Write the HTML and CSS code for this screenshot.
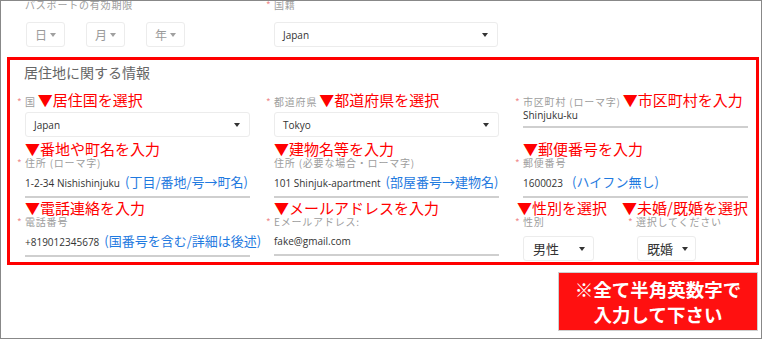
FILE: index.html
```html
<!DOCTYPE html>
<html lang="ja">
<head>
<meta charset="utf-8">
<link rel="stylesheet" href="styles.css">
</head>
<body>
<div class="frame">
  <div class="top">
    <div class="tcol">
      <div class="label">パスポートの有効期限</div>
      <div class="dates">
        <div class="dsel">日<span class="caret light"></span></div>
        <div class="dsel">月<span class="caret light"></span></div>
        <div class="dsel">年<span class="caret light"></span></div>
      </div>
    </div>
    <div class="tcol">
      <div class="label"><span class="req">*</span>国籍</div>
      <div class="select top-select"><span>Japan</span><span class="caret"></span></div>
    </div>
  </div>

  <section class="res">
    <h2 class="title">居住地に関する情報</h2>
    <div class="grid">
      <!-- row 1 -->
      <div class="cell">
        <div class="lab-line"><span class="label"><span class="req">*</span>国</span><span class="ann inl">▼居住国を選択</span></div>
        <div class="select"><span>Japan</span><span class="caret"></span></div>
      </div>
      <div class="cell">
        <div class="lab-line"><span class="label"><span class="req">*</span>都道府県</span><span class="ann inl">▼都道府県を選択</span></div>
        <div class="select"><span>Tokyo</span><span class="caret"></span></div>
      </div>
      <div class="cell">
        <div class="lab-line"><span class="label"><span class="req">*</span>市区町村 (ローマ字)</span><span class="ann inl">▼市区町村を入力</span></div>
        <div class="val compact">Shinjuku-ku</div>
      </div>

      <!-- row 2 -->
      <div class="cell">
        <div class="ann r2">▼番地や町名を入力</div>
        <div class="label"><span class="req">*</span>住所 (ローマ字)</div>
        <div class="val">1-2-34 Nishishinjuku<span class="hint">(丁目/番地/号→町名)</span></div>
      </div>
      <div class="cell">
        <div class="ann r2">▼建物名等を入力</div>
        <div class="label">住所 (必要な場合・ローマ字)</div>
        <div class="val">101 Shinjuk-apartment<span class="hint">(部屋番号→建物名)</span></div>
      </div>
      <div class="cell">
        <div class="ann r2">▼郵便番号を入力</div>
        <div class="label"><span class="req">*</span>郵便番号</div>
        <div class="val">1600023<span class="hint wide">(ハイフン無し)</span></div>
      </div>

      <!-- row 3 -->
      <div class="cell">
        <div class="ann r3">▼電話連絡を入力</div>
        <div class="label"><span class="req">*</span>電話番号</div>
        <div class="val">+819012345678<span class="hint">(国番号を含む/詳細は後述)</span></div>
      </div>
      <div class="cell">
        <div class="ann r3">▼メールアドレスを入力</div>
        <div class="label"><span class="req">*</span>Eメールアドレス:</div>
        <div class="val">fake@gmail.com</div>
      </div>
      <div class="cell">
        <div class="ann r3 pair-ann"><span>▼性別を選択</span><span>▼未婚/既婚を選択</span></div>
        <div class="pair">
          <div class="sub sub1">
            <div class="label"><span class="req">*</span>性別</div>
            <div class="msel m1"><span>男性</span><span class="caret"></span></div>
          </div>
          <div class="sub">
            <div class="label"><span class="req">*</span>選択してください</div>
            <div class="msel m2"><span>既婚</span><span class="caret"></span></div>
          </div>
        </div>
      </div>
    </div>
  </section>

  <div class="note">※全て半角英数字で<br>入力して下さい</div>
</div>
</body>
</html>
```

FILE: styles.css
```css
* { box-sizing: border-box; }

body {
  margin: 0;
  background: #fff;
  font-family: "Noto Sans", "Noto Sans CJK JP", sans-serif;
}

.frame {
  width: 762px;
  height: 339px;
  border: 1px solid #888;
  overflow: hidden;
  background: #fff;
}

/* ---------- top (passport) ---------- */
.top {
  display: grid;
  grid-template-columns: 225px 224px;
  column-gap: 24px;
  padding-left: 24px;
  margin-top: -2px;
}

.label {
  font-family: "Noto Sans CJK JP", sans-serif;
  font-size: 10px;
  letter-spacing: 0.8px;
  color: #9d9d9d;
  line-height: 12px;
  white-space: nowrap;
}

.req {
  display: inline-block;
  width: 8px;
  margin-left: -8px;
  color: #f08c8c;
  letter-spacing: 0;
}

.dates {
  display: flex;
  gap: 21px;
  margin-top: 11px;
  padding-left: 1px;
}

.dsel {
  width: 39px;
  height: 25px;
  border: 1px solid #ececec;
  border-radius: 3px;
  display: flex;
  align-items: center;
  justify-content: center;
  font-family: "Noto Sans CJK JP", sans-serif;
  font-size: 12px;
  color: #9a9a9a;
}

.caret {
  display: inline-block;
  width: 0;
  height: 0;
  border-left: 3.5px solid transparent;
  border-right: 3.5px solid transparent;
  border-top: 4px solid #333;
}

.caret.light {
  border-top-color: #a0a0a0;
  margin-left: 3px;
}

.select {
  height: 25px;
  border: 1px solid #ececec;
  border-radius: 3px;
  display: flex;
  align-items: center;
  justify-content: space-between;
  padding: 0 9px 0 8px;
  font-family: "Open Sans", sans-serif;
  font-size: 10px;
  color: #333;
  margin-top: 3px;
}

.top-select { margin-top: 11px; }

/* ---------- residence section ---------- */
.res {
  margin: 10px 2px 0 6px;
  height: 208px;
  border: 3px solid #ff0000;
  padding: 2px 0 0 15px;
}

.title {
  margin: 0 0 0 -1px;
  font-family: "Noto Sans CJK JP", sans-serif;
  font-size: 14px;
  font-weight: normal;
  line-height: 20px;
  color: #666;
}

.grid {
  display: grid;
  grid-template-columns: 225px 225px 225px;
  column-gap: 24px;
  margin-top: 9px;
}

.cell { min-width: 0; }

.lab-line {
  display: flex;
  align-items: baseline;
  height: 18px;
  padding-top: 1px;
  white-space: nowrap;
}

.ann {
  font-family: "Noto Sans CJK JP", sans-serif;
  font-size: 15px;
  line-height: 16px;
  color: #ff0000;
  white-space: nowrap;
}

.ann.inl { margin-left: 2px; }
.ann.r2 { margin-top: 4px; }
.ann.r3 { margin-top: 2px; }

.pair-ann {
  display: flex;
  gap: 15px;
  margin-left: -6px;
}

.val {
  margin-top: 5px;
  font-family: "Open Sans", sans-serif;
  font-size: 10px;
  color: #333;
  line-height: 16px;
  padding-bottom: 5px;
  border-bottom: 2px solid #cfcfcf;
  white-space: nowrap;
}

.val.compact {
  margin-top: -1px;
  line-height: 14px;
  padding-bottom: 4px;
}

.hint {
  margin-left: 5px;
  font-family: "Noto Sans CJK JP", sans-serif;
  font-size: 13px;
  color: #1f7ae0;
}

.hint.wide { margin-left: 9px; }

.pair { display: flex; }

.sub1 { width: 113px; }

.msel {
  margin-top: 8px;
  height: 25px;
  border: 1px solid #ececec;
  border-radius: 3px;
  display: flex;
  align-items: center;
  justify-content: space-between;
  padding: 0 8px 0 9px;
  font-family: "Noto Sans CJK JP", sans-serif;
  font-size: 13px;
  color: #333;
}

.m1 { width: 71px; }
.m2 { width: 59px; margin-left: 1px; padding-right: 7px; }

/* ---------- note ---------- */
.note {
  width: 200px;
  height: 59px;
  margin: 7px 3px 0 auto;
  padding-top: 4px;
  background: #ff1010;
  border: 1px solid #cfcfcf;
  color: #fff;
  font-family: "Noto Sans CJK JP", sans-serif;
  font-weight: bold;
  font-size: 18.5px;
  line-height: 25px;
  text-align: center;
}
```
